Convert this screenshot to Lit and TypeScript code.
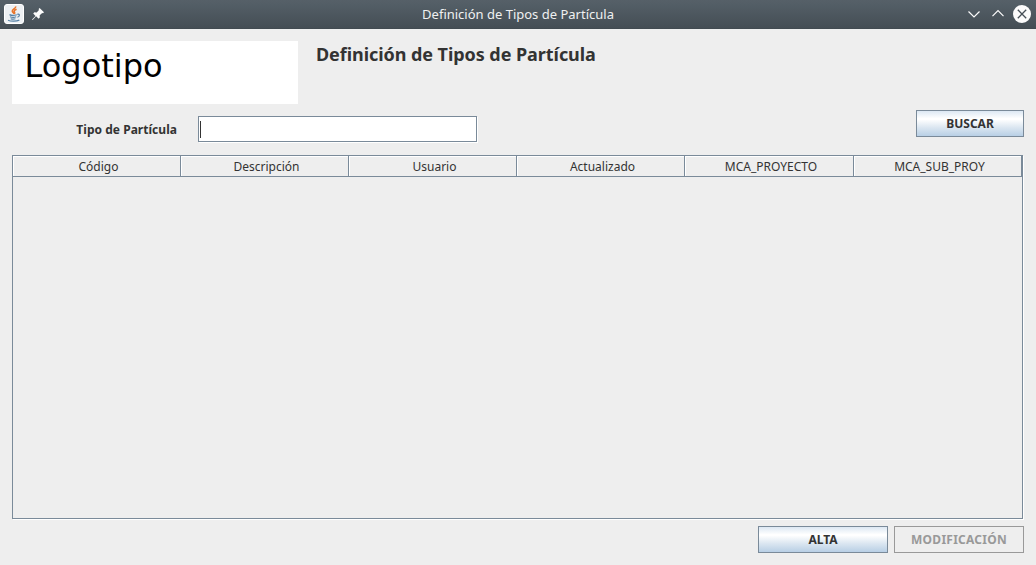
import { LitElement, html, css } from "lit";
import { customElement, property } from "lit/decorators.js";

@customElement("title-bar")
class TitleBar extends LitElement {
  @property() caption = "";

  static styles = css`
    :host {
      display: grid;
      grid-template-columns: 1fr auto 1fr;
      align-items: center;
      height: 29px;
      background: linear-gradient(#566068, #535e66 15%, #454e55 95%, #3f484e);
      color: #eff0f1;
      font: 13px/18px "Noto Sans", sans-serif;
    }
    .left { display: flex; gap: 7px; padding-left: 4px; height: 29px; align-items: center; }
    .caption { white-space: nowrap; padding-bottom: 1px; }
    .right { display: flex; justify-content: flex-end; gap: 4px; padding-right: 4px; }
    .left svg, .right svg { display: block; margin-top: -1px; }
  `;

  render() {
    return html`
      <div class="left">
        <svg width="20" height="20" viewBox="0 0 20 20" fill="none">
          <rect x="0.5" y="0.5" width="19" height="19" rx="2.5" fill="#edf0f3" stroke="#fff" />
          <path d="M11.6 2.400c.8 2-3.500 2.900-3.300 4.700.1 1.100 1.300 1.700 1.800 2.700M12.600 5.300c-1.900.8-2.900 1.600-2.200 2.600.5.700.6 1.200-.1 2" stroke="#e8762c" stroke-width="1.600" />
          <path d="M5.500 10.600c1.500.8 5.500.7 7.300.1M6 12.700c1.900.8 4.500.7 6.200.1M6.700 14.700c1.500.6 3.300.6 4.700.1M4 16.300c3 1.300 8.500 1.200 11.300-.2M13.300 10.300c2.900-.7 2.600 2.100.1 3" stroke="#5580a5" stroke-width="1.200" />
        </svg>
        <svg width="14" height="14" viewBox="0 0 14 14" fill="#fcfcfc">
          <path d="M8.600 1 13 5.200l-1 1-.8-.3-2.500 2.400.1 2.200-1.200 1.200-2.500-2.400L1.700 13 1 12.400l3.500-3.500L2.200 6.500l1.200-1.200 2.300.1L8 3l-.4-1z" />
        </svg>
      </div>
      <div class="caption">${this.caption}</div>
      <div class="right">
        <svg width="20" height="20" viewBox="0 0 20 20" fill="none" stroke="#fcfcfc" stroke-width="1.200"><path d="M4.500 7.500 10 13l5.500-5.500" /></svg>
        <svg width="20" height="20" viewBox="0 0 20 20" fill="none" stroke="#fcfcfc" stroke-width="1.200"><path d="M4.500 12.200 10 6.700l5.500 5.500" /></svg>
        <svg width="20" height="20" viewBox="0 0 20 20" fill="none"><circle cx="10" cy="10" r="9" fill="#fcfcfc" /><path d="m5.800 5.800 8.400 8.400m0-8.400-8.400 8.400" stroke="#475057" stroke-width="1.300" /></svg>
      </div>
    `;
  }
}

@customElement("app-root")
class AppRoot extends LitElement {
  private columns = ["Código", "Descripción", "Usuario", "Actualizado", "MCA_PROYECTO", "MCA_SUB_PROY"];

  static styles = css`
    :host {
      display: flex;
      flex-direction: column;
      height: 565px;
      background: #eee;
      color: #333;
      font: 12px/16px "Noto Sans", sans-serif;
    }
    .head { display: flex; gap: 18px; padding: 12px 12px 0; height: 63px; }
    .logo {
      box-sizing: border-box;
      width: 286px;
      padding: 6px 0 0 12.500px;
      background: #fff;
      color: #000;
      font: 32px/38px "DejaVu Sans", sans-serif;
    }
    h1 { margin: 1px 0 0; font-size: 18px; line-height: 25px; font-weight: 700; letter-spacing: -0.06px; white-space: nowrap; }
    .search { display: flex; height: 51px; padding: 0 12px; }
    .search label { width: 165px; padding-top: 18px; text-align: right; font-weight: 700; letter-spacing: 0.03px; }
    .field {
      box-sizing: border-box;
      width: 279px;
      height: 26px;
      margin: 12px auto 0 21px;
      padding: 4px 0 0 1px;
      border: 1px solid #7a8a99;
      background: #fff;
      box-shadow: 1px 1px 0 #fff;
    }
    .caret { width: 1px; height: 17px; background: #333; }
    button {
      box-sizing: border-box;
      width: 108px;
      height: 27px;
      padding: 0;
      border: 1px solid #7a8a99;
      border-radius: 0;
      background: linear-gradient(#dde8f3, #fff 30%, #fff 34%, #dce7f1 65%, #b8cfe5);
      color: #333;
      font: 700 12px/16px "Noto Sans", sans-serif;
    }
    .search button { margin-top: 6px; }
    .table {
      box-sizing: border-box;
      width: 1011px;
      height: 364px;
      margin-left: 12px;
      border: 1px solid #7a8a99;
      box-shadow: 1px 1px 0 #fff;
    }
    .columns { display: grid; grid-template-columns: repeat(4, 168px) 169px 168px; height: 21px; }
    .column {
      box-sizing: border-box;
      padding: 3px 0 0 4px;
      border: solid #7a8a99;
      border-width: 0 1px 1px 0;
      box-shadow: inset 1px 1px 0 #fff;
      text-align: center;
      white-space: nowrap;
    }
    .actions { display: flex; justify-content: flex-end; gap: 6px; padding: 7px 12px 0; }
    .actions button { width: 130px; }
    .actions button:disabled { border-color: #999; background: #eee; color: #999; letter-spacing: 0.25px; }
  `;

  render() {
    return html`
      <title-bar caption="Definición de Tipos de Partícula"></title-bar>
      <div class="head">
        <div class="logo">Logotipo</div>
        <h1>Definición de Tipos de Partícula</h1>
      </div>
      <div class="search">
        <label>Tipo de Partícula</label>
        <div class="field"><div class="caret"></div></div>
        <button>BUSCAR</button>
      </div>
      <div class="table">
        <div class="columns">${this.columns.map((name) => html`<div class="column">${name}</div>`)}</div>
      </div>
      <div class="actions">
        <button>ALTA</button>
        <button disabled>MODIFICACIÓN</button>
      </div>
    `;
  }
}
